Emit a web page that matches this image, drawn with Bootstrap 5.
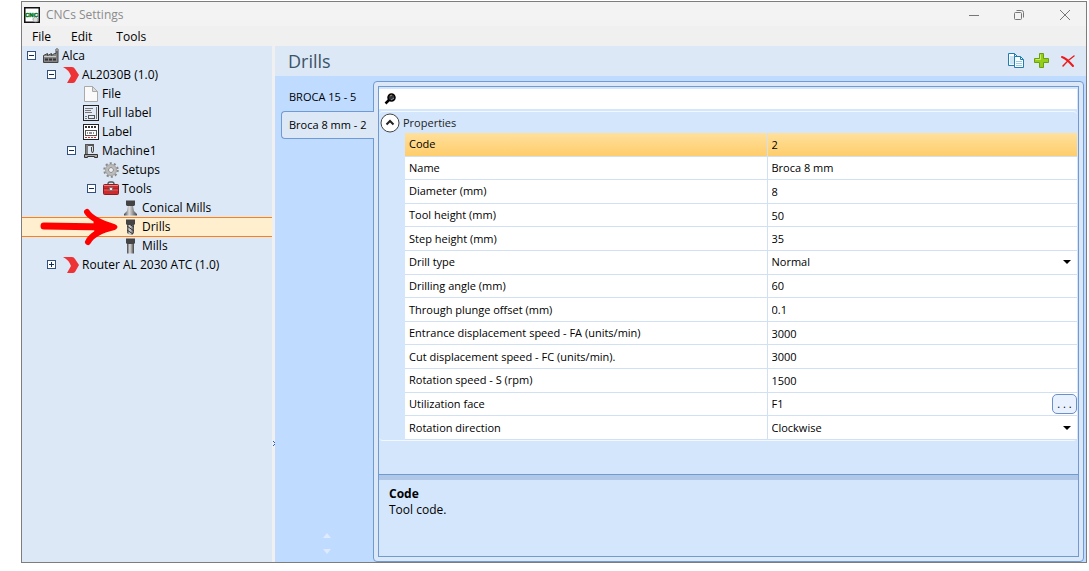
<!DOCTYPE html>
<html lang="en">
<head>
<meta charset="utf-8">
<meta name="viewport" content="width=device-width, initial-scale=1">
<title>CNCs Settings</title>
<link href="https://cdn.jsdelivr.net/npm/bootstrap@5.3.0/dist/css/bootstrap.min.css" rel="stylesheet">
<style>
body{font-family:"Open Sans","Noto Sans",sans-serif;font-size:12px;line-height:16px;color:#000;background:#fff}
button,input,select{font:inherit;color:inherit}
.window{min-height:calc(100vh - 9px);margin:1px 2px 8px 21px;border:1px solid #7d7d7d;background:#f0f0f0}
.titlebar{height:24px;background:#f3f3f3;color:#8b8b8b;padding:1px 15px 0 2px;gap:6px}
.captions{gap:33px}
.plain{background:none;border:0;padding:0;display:block}
.menubar{height:20px;padding:1px 0 0 10px;gap:20px}
.menubar a{color:#000;text-decoration:none}
.tree{width:250px;background:#dce8f6}
.node{height:19px;gap:3px;padding-left:5px;white-space:nowrap}
.node.lv1{padding-left:25px}.node.lv2{padding-left:45px}.node.lv3{padding-left:65px}.node.lv4{padding-left:85px}
.node svg.ico{width:16px;height:16px;flex:none;overflow:visible}
.expander{width:9px;height:9px;margin-right:4px;flex:none}
.node.active{background:#ffefcf;border-top:1px solid #ff8010;box-shadow:0 1px #ff8010}
.arrow{position:absolute;left:18px;top:-10px}
.splitter{width:3px;background:#f0f0f0;flex:none;position:relative}
.grip{position:absolute;top:394px;left:0}
.work{background:#bfdbff;min-width:0}
.heading{height:30px;background:#dce8f6;padding:0 10px 0 13px}
.heading h1{font-size:18px;line-height:24px;color:#3b5468;font-weight:400}
.tools{gap:10px}
.tabs{width:98px;padding:7px 0 8px 6px;font-size:11px;flex:none}
.tabs button{height:28px;text-align:left;padding:0 0 0 7px;border:1px solid transparent;border-right:0;background:none;white-space:nowrap}
.tabs button.active{background:#dce8f6;border-color:#6f9ad3;border-radius:4px 0 0 4px;position:relative;z-index:1;margin-right:-1px}
.spin{gap:11px}
.panel{border:1px solid #6f9ad3;border-radius:4px;background:#dce8f6;padding:4px;margin:5px 2px 0 0;min-width:0}
.inspector{border:1px solid #6f9ad3;background:#d4e6fc}
.search{height:20px;margin:2px 1px 2px 0;background:#fff;padding-left:5px}
.search input{border:0;outline:0;background:none;font-size:11px;padding:0 6px}
.category{border:1px solid #f3f8ff;border-left-width:0;border-right-width:0;border-radius:4px;margin-right:1px}
.catname{height:21px;gap:3px;padding-left:1px;font-size:11px;color:#222}
.catname button{flex:none;position:relative;z-index:1}
.props{height:307px;width:calc(100% - 26px);margin-left:26px;table-layout:fixed;font-size:11px;line-height:14px;background:#fff}
.props th,.props td{font-weight:400;padding:0 4px;border-bottom:1px solid #d1e0f3;vertical-align:middle;overflow:hidden;white-space:nowrap}
.props th{width:362px;border-right:1px solid #d1e0f3}
.props td{padding:0 0 0 4px}
.props label{display:block}
.props input,.props select{border:0;background:none;padding:0;width:100%;height:20px;display:block;outline:0}
.props select{appearance:none}
.pick{position:relative}
.pick::after{content:"";position:absolute;right:6px;top:8px;border:4px solid transparent;border-top-color:#000;border-bottom:0;pointer-events:none}
.props .picked th,.props .picked td{background:linear-gradient(#ffe09c,#ffcd6b)}
.more{width:25px;height:20px;border:1px solid #6b8fc7;border-radius:5px;background:#e8f1fd;padding:9px 0 0;flex:none}
.divider{height:6px;border-top:1px solid #6f9ad3;background:#b0c7e8}
.describe{height:76px;padding:6px 10px}
</style>
</head>
<body>
<svg class="position-absolute" width="0" height="0" aria-hidden="true">
 <symbol id="minus" viewBox="0 0 9 9"><rect x=".5" y=".5" width="8" height="8" fill="#fff" stroke="#31507c"/><path d="M2 4.500h5" stroke="#102a5c"/></symbol>
 <symbol id="plus" viewBox="0 0 9 9"><rect x=".5" y=".5" width="8" height="8" fill="#fff" stroke="#31507c"/><path d="M2 4.500h5M4.500 2v5" stroke="#102a5c"/></symbol>
 <symbol id="chevron" viewBox="0 0 16 16"><path d="M0 0h9q2 0 3 2l4 6-4 7q-1 1-2 1H4l4-7Q6 3 0 0z" fill="#ee3337"/></symbol>
 <linearGradient id="steel"><stop offset="0" stop-color="#444"/><stop offset=".4" stop-color="#ddd"/><stop offset="1" stop-color="#444"/></linearGradient>
</svg>
<div class="window d-flex flex-column">
 <header class="titlebar d-flex align-items-center">
  <svg width="16" height="16" viewBox="0 0 16 16"><rect x=".75" y=".75" width="14.500" height="14.500" fill="#fff" stroke="#111" stroke-width="1.500"/><text x="1" y="10" font-size="6" font-weight="900" font-family="Liberation Sans, sans-serif" fill="#087a20" stroke="#087a20" stroke-width=".5">CNC</text><circle cx="11.500" cy="12.500" r="2.500" fill="#ddd" stroke="#777" stroke-dasharray="1 .7"/></svg>
  <span>CNCs Settings</span>
  <div class="captions ms-auto d-flex">
   <button class="plain" aria-label="Minimize"><svg class="d-block" width="12" height="12" fill="none" stroke="#777"><path d="M0 6.500h10"/></svg></button>
   <button class="plain" aria-label="Restore"><svg class="d-block" width="12" height="12" fill="none" stroke="#777"><rect x=".5" y="3.500" width="7" height="7" rx="1"/><path d="M2.500 1.500h5q2 0 2 2v5"/></svg></button>
   <button class="plain" aria-label="Close"><svg class="d-block" width="12" height="12" fill="none" stroke="#777"><path d="M1 1l10 10M11 1L1 11"/></svg></button>
  </div>
 </header>
 <nav class="menubar d-flex align-items-center"><a href="#">File</a><a href="#">Edit</a><a href="#" class="ms-1">Tools</a></nav>
 <div class="d-flex flex-grow-1">
  <aside class="tree flex-shrink-0">
   <div class="node d-flex align-items-center"><button class="plain expander" aria-label="Collapse Alca"><svg class="d-block" width="9" height="9"><use href="#minus"/></svg></button>
    <svg class="ico" viewBox="0 0 16 16"><path d="M.5 14.500V7.500l4-2v2l4-2v2l3-2h1.500V1h2v13.500z" fill="#858585" stroke="#444"/><path d="M1 8.500h12" stroke="#ccc"/><path d="M2 11.500h11" stroke="#333" stroke-width="2" stroke-dasharray="3 1"/><path d="M13 2h2" stroke="#ccc"/></svg><span>Alca</span></div>
   <div class="node lv1 d-flex align-items-center"><button class="plain expander" aria-label="Collapse AL2030B"><svg class="d-block" width="9" height="9"><use href="#minus"/></svg></button><svg class="ico"><use href="#chevron"/></svg><span>AL2030B (1.0)</span></div>
   <div class="node lv2 d-flex align-items-center"><span class="expander"></span><svg class="ico" viewBox="0 0 16 16"><path d="M1.500.5h8l5 5v10h-13z" fill="#fafafa" stroke="#aaa"/><path d="M9.500.5v5h5z" fill="#ddd" stroke="#aaa"/></svg><span>File</span></div>
   <div class="node lv2 d-flex align-items-center"><span class="expander"></span><svg class="ico" viewBox="0 0 16 16" fill="none"><rect x=".5" y=".5" width="15" height="15" fill="#e2ebf6" stroke="#222"/><path d="M2 3.500h8M2 5.500h6M2 7.500h7M13.500 2v12M2 11.500h2M2 13.500h2" stroke="#777"/><rect x="5.500" y="10.500" width="6" height="3" stroke="#555"/></svg><span>Full label</span></div>
   <div class="node lv2 d-flex align-items-center"><span class="expander"></span><svg class="ico" viewBox="0 0 16 16" fill="none"><rect x=".5" y=".5" width="15" height="15" fill="#fff" stroke="#222"/><path d="M2 3h12" stroke="#333" stroke-width="2" stroke-dasharray="2 1"/><rect x="2.500" y="6.500" width="11" height="5" stroke="#555"/><path d="M4 9h8" stroke="#222" stroke-dasharray="1 1 3 1"/><path d="M2 13.500h12" stroke="#e22" stroke-dasharray="2 1"/></svg><span>Label</span></div>
   <div class="node lv2 d-flex align-items-center"><button class="plain expander" aria-label="Collapse Machine1"><svg class="d-block" width="9" height="9"><use href="#minus"/></svg></button><svg class="ico" viewBox="0 0 16 16"><path d="M2 1h9v4H9.500V3H5v8H2z" fill="#555"/><path d="M4 2v9" stroke="#aaa"/><path d="M8.500 4v4l1 2 1-2V4" fill="#ddd" stroke="#444"/><path d="M1.500 11.500h13v3h-3v-1h-7v1h-3z" fill="#aaa" stroke="#333"/></svg><span>Machine1</span></div>
   <div class="node lv3 d-flex align-items-center"><span class="expander"></span><svg class="ico" viewBox="0 0 16 16" fill="none"><circle cx="8" cy="8" r="6.500" stroke="#888" stroke-width="2.500" stroke-dasharray="2 2.080"/><circle cx="8" cy="8" r="4.500" stroke="#bbb" stroke-width="3"/><circle cx="8" cy="8" r="5.500" stroke="#999" stroke-width=".6"/><circle cx="8" cy="8" r="2.500" stroke="#888" fill="#eee"/></svg><span>Setups</span></div>
   <div class="node lv3 d-flex align-items-center"><button class="plain expander" aria-label="Collapse Tools"><svg class="d-block" width="9" height="9"><use href="#minus"/></svg></button><svg class="ico" viewBox="0 0 16 16"><path d="M5 4V3q0-2 2-2h2q2 0 2 2v1" fill="none" stroke="#555" stroke-width="1.300"/><rect x=".5" y="3.500" width="15" height="10" rx="1" fill="#cf2b2d" stroke="#8c1d20"/><path d="M1 4.500h14" stroke="#f08080"/><path d="M0 8h16" stroke="#8c1d20" /><path d="M1 9h14" stroke="#ed6262"/><rect x="6.500" y="6.500" width="3" height="3" fill="#eee" stroke="#777"/></svg><span>Tools</span></div>
   <div class="node lv4 d-flex align-items-center"><span class="expander"></span><svg class="ico" viewBox="0 0 16 16"><path d="M5 6h5l1 5 3 3v1.500H1V14l3-3z" fill="url(#steel)"/><path d="M3 .5h9V5l-1 1H4L3 5z" fill="#444"/></svg><span>Conical Mills</span></div>
   <div class="node lv4 active position-relative d-flex align-items-center"><svg class="arrow" width="80" height="38" viewBox="0 0 80 38" fill="none" stroke="#f00" stroke-linecap="round" stroke-linejoin="round"><path d="M4 18L66 19" stroke-width="7"/><path d="M47 4Q52 12 74 19Q53 24 48 34" stroke-width="6"/><path d="M55 14L76 19L56 25z" fill="#f00" stroke-width="3"/></svg><span class="expander"></span><svg class="ico" viewBox="0 0 16 16"><path d="M4 5h7v9l-2 2H7l-3-2z" fill="url(#steel)"/><path d="M4 7l7 5M4 11l6 4M6 5l5 3" stroke="#333"/><path d="M3 .5h9V5l-1 1H4L3 5z" fill="#444"/></svg><span>Drills</span></div>
   <div class="node lv4 d-flex align-items-center"><span class="expander"></span><svg class="ico" viewBox="0 0 16 16"><path d="M4 5h7v10.500H4z" fill="url(#steel)"/><path d="M3 .5h9V5l-1 1H4L3 5z" fill="#444"/></svg><span>Mills</span></div>
   <div class="node lv1 d-flex align-items-center"><button class="plain expander" aria-label="Expand Router"><svg class="d-block" width="9" height="9"><use href="#plus"/></svg></button><svg class="ico"><use href="#chevron"/></svg><span>Router AL 2030 ATC (1.0)</span></div>
  </aside>
  <div class="splitter"><svg class="grip" width="3" height="7"><path d="M1 1h1v1h1v1H2V2H1zM2 4h1v1H2v1H1V5h1z" fill="#1f62c4"/></svg></div>
  <main class="work flex-grow-1 d-flex flex-column">
   <div class="heading d-flex align-items-center">
    <h1 class="m-0">Drills</h1>
    <div class="tools ms-auto d-flex">
     <button class="plain" aria-label="Copy"><svg class="d-block" width="16" height="16" fill="#fff" stroke="#1b7fb4"><path d="M.5.5h6l3 3v9h-9z"/><path d="M2 4h4M2 6h4M2 8h4M2 10h4" stroke="#9cc9e4"/><path d="M6.500 3.500h6l3 3v8h-9z"/><path d="M12.500 3.500v3h3M6.500.5v3" fill="none"/><path d="M8 8.500h6M8 10.500h6M8 12.500h6" stroke="#9cc9e4"/></svg></button>
     <button class="plain" aria-label="Add"><svg class="d-block" width="16" height="16"><path d="M5.500.5h4v5h5v4h-5v5h-4v-5h-5v-4h5z" fill="#94ce17" stroke="#69a010"/><path d="M6.500 1.500v5h-5" fill="none" stroke="#c9ed6f"/></svg></button>
     <button class="plain" aria-label="Delete"><svg class="d-block" width="16" height="16" fill="none" stroke="#f01818" stroke-linecap="round"><path d="M2 4Q6 5 13 13" stroke-width="2"/><path d="M14 3Q8 7 3 13" stroke-width="1.500"/></svg></button>
    </div>
   </div>
   <div class="d-flex flex-grow-1">
    <div class="tabs d-flex flex-column"><button>BROCA 15 - 5</button><button class="active">Broca 8 mm - 2</button>
     <div class="spin mt-auto d-flex flex-column align-items-center"><button class="p-0 h-auto border-0" aria-label="Scroll up"><svg class="d-block" width="8" height="5"><path d="M0 5L4 0l4 5z" fill="#dfeafb"/></svg></button><button class="p-0 h-auto border-0" aria-label="Scroll down"><svg class="d-block" width="8" height="5"><path d="M0 0h8L4 5z" fill="#dfeafb"/></svg></button></div>
    </div>
    <section class="panel flex-grow-1 d-flex">
     <div class="inspector flex-grow-1 d-flex flex-column w-100">
      <div class="search d-flex align-items-center"><svg class="flex-shrink-0" width="12" height="12"><circle cx="7.500" cy="4.500" r="3.500" fill="#333" stroke="#000" stroke-width="1.500"/><path d="M1.500 10.500L5 7" stroke="#000" stroke-width="2.500"/><path d="M6 3l2-1" stroke="#b98a55"/><path d="M7 7l3-2" stroke="#7a97b0"/></svg><input class="flex-grow-1" type="text" aria-label="Search properties"></div>
      <div class="category">
       <div class="catname d-flex align-items-center"><button class="plain" aria-label="Collapse properties"><svg class="d-block" width="20" height="20" fill="none"><circle cx="10" cy="10" r="9" fill="#fff" stroke="#444"/><path d="M6.500 11.500L10 8l3.500 3.500" stroke="#222" stroke-width="2"/></svg></button><span>Properties</span></div>
       <table class="props">
        <tr class="picked"><th><label for="p1">Code</label></th><td><input id="p1" value="2"></td></tr>
        <tr><th><label for="p2">Name</label></th><td><input id="p2" value="Broca 8 mm"></td></tr>
        <tr><th><label for="p3">Diameter (mm)</label></th><td><input id="p3" value="8"></td></tr>
        <tr><th><label for="p4">Tool height (mm)</label></th><td><input id="p4" value="50"></td></tr>
        <tr><th><label for="p5">Step height (mm)</label></th><td><input id="p5" value="35"></td></tr>
        <tr><th><label for="p6">Drill type</label></th><td><div class="pick"><select id="p6"><option>Normal</option></select></div></td></tr>
        <tr><th><label for="p7">Drilling angle (mm)</label></th><td><input id="p7" value="60"></td></tr>
        <tr><th><label for="p8">Through plunge offset (mm)</label></th><td><input id="p8" value="0.1"></td></tr>
        <tr><th><label for="p9">Entrance displacement speed - FA (units/min)</label></th><td><input id="p9" value="3000"></td></tr>
        <tr><th><label for="p10">Cut displacement speed - FC (units/min).</label></th><td><input id="p10" value="3000"></td></tr>
        <tr><th><label for="p11">Rotation speed - S (rpm)</label></th><td><input id="p11" value="1500"></td></tr>
        <tr><th><label for="p12">Utilization face</label></th><td><div class="d-flex align-items-center"><input id="p12" value="F1"><button class="more d-flex align-items-center justify-content-center p-0" aria-label="Choose face"><span>. . .</span></button></div></td></tr>
        <tr><th><label for="p13">Rotation direction</label></th><td><div class="pick"><select id="p13"><option>Clockwise</option></select></div></td></tr>
       </table>
      </div>
      <div class="divider mt-auto"></div>
      <div class="describe"><div class="fw-bold">Code</div><div>Tool code.</div></div>
     </div>
    </section>
   </div>
  </main>
 </div>
</div>
<script src="https://cdn.jsdelivr.net/npm/bootstrap@5.3.0/dist/js/bootstrap.bundle.min.js"></script>
</body>
</html>
